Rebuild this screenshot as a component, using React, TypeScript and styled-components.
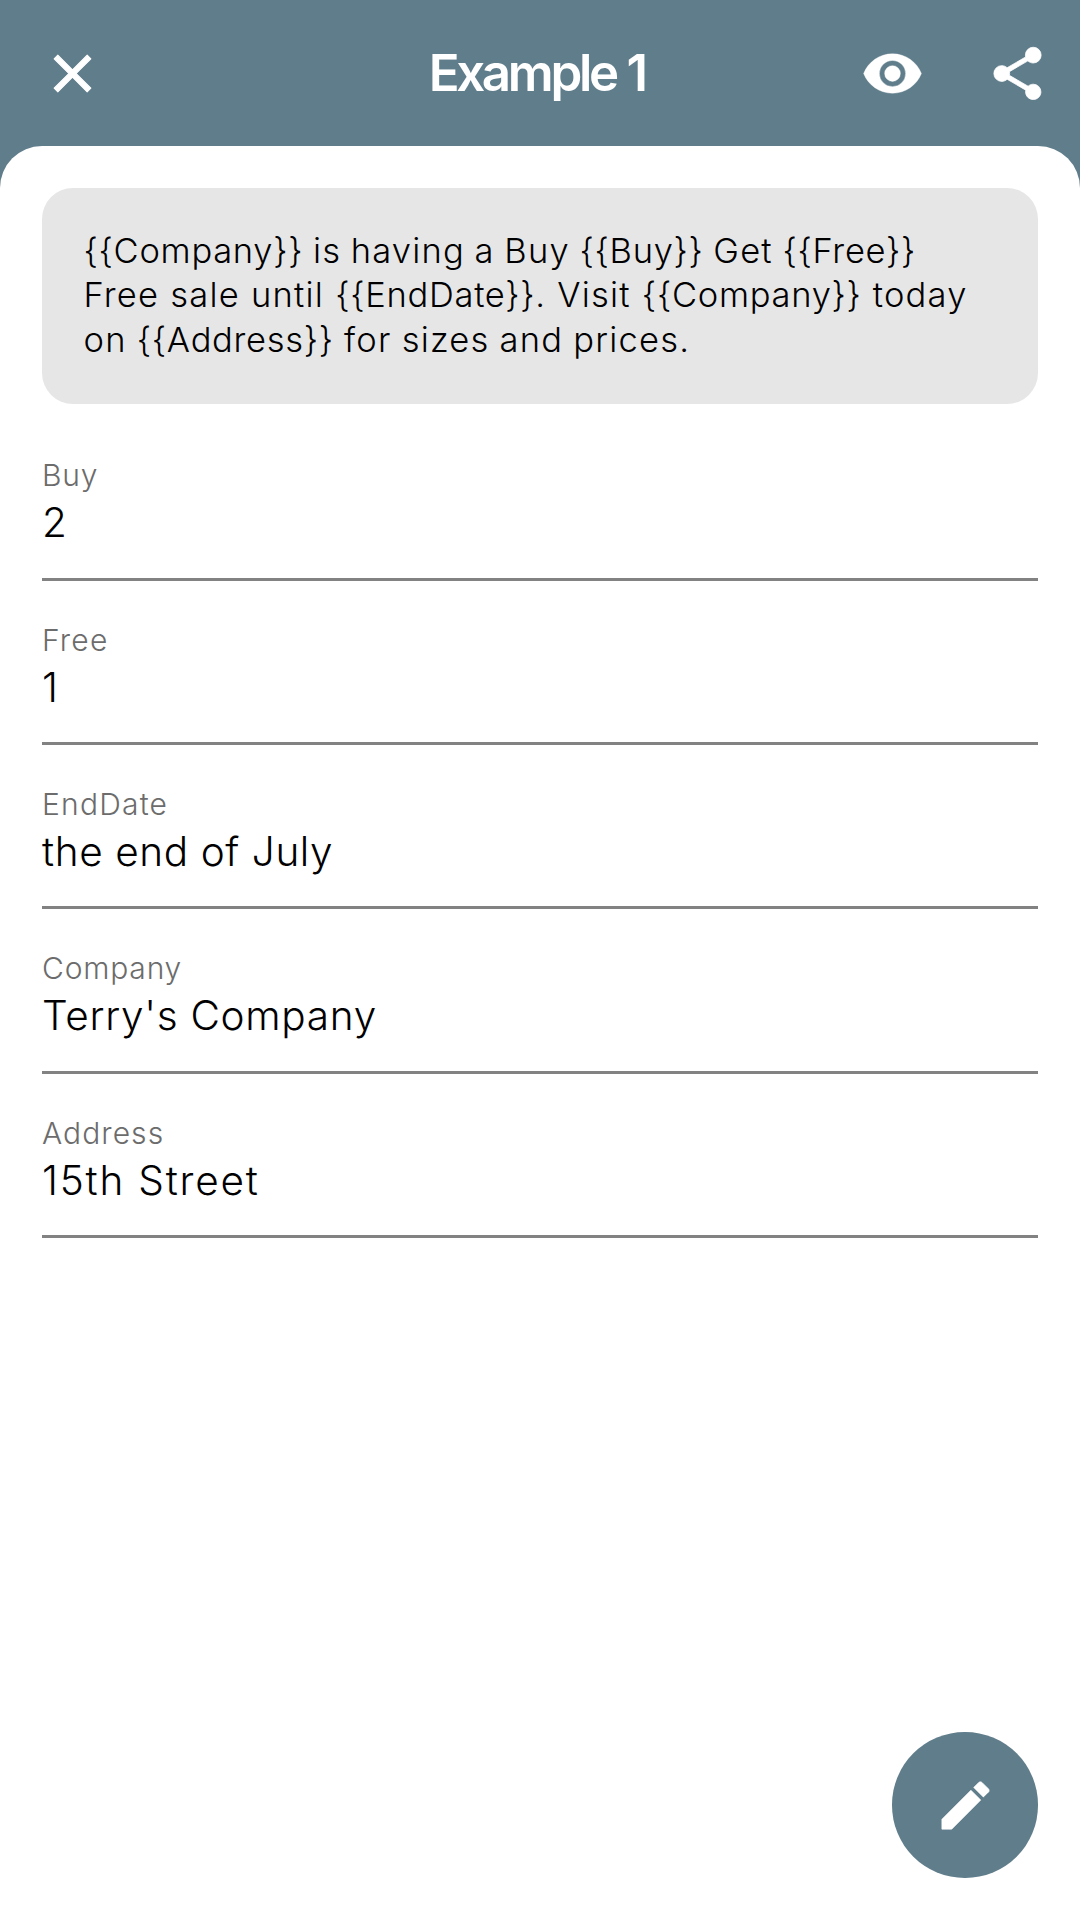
import React from "react";
import styled, { createGlobalStyle } from "styled-components";

const GlobalStyle = createGlobalStyle`
  *, *::before, *::after { box-sizing: border-box; }
  body { margin: 0; background: #607d8b; }
`;

const Screen = styled.div`
  display: flex;
  flex-direction: column;
  width: 100%;
  height: 1920px;
  background: #607d8b;
  color: #000;
  font-family: Inter, "Liberation Sans", sans-serif;
`;

const Header = styled.header`
  display: grid;
  grid-template-columns: 1fr auto 1fr;
  align-items: center;
  flex: none;
  height: 146px;
  padding: 0 31px 0 41.4px;
`;

const Title = styled.h1`
  margin: 0;
  padding: 0 17px 0 0;
  color: #fff;
  font-size: 51px;
  font-weight: 570;
  line-height: 60px;
  letter-spacing: -3.3px;
  word-spacing: 1px;
`;

const Actions = styled.div`
  display: flex;
  justify-content: flex-end;
  gap: 62px;
`;

const IconButton = styled.button`
  display: flex;
  align-items: center;
  justify-content: center;
  width: 63px;
  height: 63px;
  padding: 0;
  border: 0;
  background: none;
`;

const Icon = styled.svg<{ $stroke: number }>`
  display: block;
  width: 63px;
  height: 63px;
  fill: #fff;
  stroke: #fff;
  stroke-width: ${(p) => p.$stroke};
  stroke-linejoin: round;
`;

const Sheet = styled.main`
  display: flex;
  flex-direction: column;
  flex: 1;
  padding: 42px;
  border-radius: 42px 42px 0 0;
  background: #fff;
`;

const Template = styled.section`
  display: flex;
  flex-direction: column;
  height: 216px;
  padding: 41px 41.5px 0;
  border-radius: 31px;
  background: #e6e6e6;
`;

const TemplateLine = styled.span<{ $gap: number }>`
  font-size: 34.5px;
  font-weight: 300;
  line-height: 44.45px;
  letter-spacing: 1.2px;
  word-spacing: ${(p) => p.$gap}px;
  white-space: nowrap;
`;

const Placeholder = styled.span`
  letter-spacing: 0.7px;
`;

const Fields = styled.div`
  display: flex;
  flex-direction: column;
  margin-top: 12.2px;
`;

const Field = styled.label`
  display: flex;
  flex-direction: column;
  height: 164.35px;
  padding-top: 43px;
`;

const FieldName = styled.span<{ $tracking: number }>`
  color: #6c6c6c;
  font-size: 30px;
  font-weight: 300;
  line-height: 32px;
  letter-spacing: ${(p) => p.$tracking}px;
`;

const FieldValue = styled.span<{ $tracking: number }>`
  margin-top: 7px;
  font-size: 40.5px;
  font-weight: 300;
  line-height: 50px;
  letter-spacing: ${(p) => p.$tracking}px;
`;

const Underline = styled.span`
  height: 3px;
  margin-top: 29.4px;
  background: #828282;
`;

const EditButton = styled.button`
  display: flex;
  align-items: center;
  justify-content: center;
  align-self: flex-end;
  width: 145.6px;
  height: 145.6px;
  margin-top: auto;
  padding: 0;
  border: 0;
  border-radius: 50%;
  background: #607d8b;
`;

const glyphs = {
  close: {
    stroke: 0.4,
    d: "M19,6.41L17.59,5L12,10.59L6.41,5L5,6.41L10.59,12L5,17.59L6.41,19L12,13.41L17.59,19L19,17.59L13.41,12L19,6.41Z",
  },
  eye: {
    stroke: 0.15,
    d: "M12,9A3,3 0 0,0 9,12A3,3 0 0,0 12,15A3,3 0 0,0 15,12A3,3 0 0,0 12,9M12,17A5,5 0 0,1 7,12A5,5 0 0,1 12,7A5,5 0 0,1 17,12A5,5 0 0,1 12,17M12,4.5C7,4.5 2.73,7.61 1,12C2.73,16.39 7,19.5 12,19.5C17,19.5 21.27,16.39 23,12C21.27,7.61 17,4.5 12,4.5Z",
  },
  share: {
    stroke: 0.3,
    d: "M18,16.08C17.24,16.08 16.56,16.38 16.04,16.85L8.91,12.7C8.96,12.47 9,12.24 9,12C9,11.76 8.96,11.53 8.91,11.3L15.96,7.19C16.5,7.69 17.21,8 18,8A3,3 0 0,0 21,5A3,3 0 0,0 18,2A3,3 0 0,0 15,5C15,5.24 15.04,5.47 15.09,5.7L8.04,9.81C7.5,9.31 6.79,9 6,9A3,3 0 0,0 3,12A3,3 0 0,0 6,15C6.79,15 7.5,14.69 8.04,14.19L15.16,18.34C15.11,18.55 15.08,18.77 15.08,19C15.08,20.61 16.39,21.91 18,21.91C19.61,21.91 20.92,20.61 20.92,19A2.92,2.92 0 0,0 18,16.08Z",
  },
  pencil: {
    stroke: 0.25,
    d: "M20.71,7.04C21.1,6.65 21.1,6 20.71,5.63L18.37,3.29C18,2.9 17.35,2.9 16.96,3.29L15.12,5.12L18.87,8.87M3,17.25V21H6.75L17.81,9.93L14.06,6.18L3,17.25Z",
  },
};

const Glyph = ({ name }: { name: keyof typeof glyphs }) => (
  <Icon viewBox="0 0 24 24" aria-hidden="true" $stroke={glyphs[name].stroke}>
    <path d={glyphs[name].d} />
  </Icon>
);

const templateLines = [
  { text: "{{Company}} is having a Buy {{Buy}} Get {{Free}}", gap: -1.3 },
  { text: "Free sale until {{EndDate}}. Visit {{Company}} today", gap: 0.2 },
  { text: "on {{Address}} for sizes and prices.", gap: -0.8 },
];

const fields = [
  { name: "Buy", nameTracking: 0.8, value: "2", valueTracking: 0 },
  { name: "Free", nameTracking: 1.2, value: "1", valueTracking: 0 },
  { name: "EndDate", nameTracking: 1.2, value: "the end of July", valueTracking: 0.6 },
  { name: "Company", nameTracking: 0.8, value: "Terry's Company", valueTracking: 0.7 },
  { name: "Address", nameTracking: 1.05, value: "15th Street", valueTracking: 1.8 },
];

export default function App() {
  return (
    <>
      <GlobalStyle />
      <Screen>
        <Header>
          <IconButton aria-label="Close">
            <Glyph name="close" />
          </IconButton>
          <Title>Example 1</Title>
          <Actions>
            <IconButton aria-label="Preview">
              <Glyph name="eye" />
            </IconButton>
            <IconButton aria-label="Share">
              <Glyph name="share" />
            </IconButton>
          </Actions>
        </Header>
        <Sheet>
          <Template>
            {templateLines.map((line) => (
              <TemplateLine key={line.text} $gap={line.gap}>
                {line.text
                  .split(/(\{\{\w+\}\})/)
                  .filter(Boolean)
                  .map((part, i) =>
                    part.startsWith("{{") ? <Placeholder key={i}>{part}</Placeholder> : part
                  )}
              </TemplateLine>
            ))}
          </Template>
          <Fields>
            {fields.map((field) => (
              <Field key={field.name}>
                <FieldName $tracking={field.nameTracking}>{field.name}</FieldName>
                <FieldValue $tracking={field.valueTracking}>{field.value}</FieldValue>
                <Underline />
              </Field>
            ))}
          </Fields>
          <EditButton aria-label="Edit">
            <Glyph name="pencil" />
          </EditButton>
        </Sheet>
      </Screen>
    </>
  );
}
